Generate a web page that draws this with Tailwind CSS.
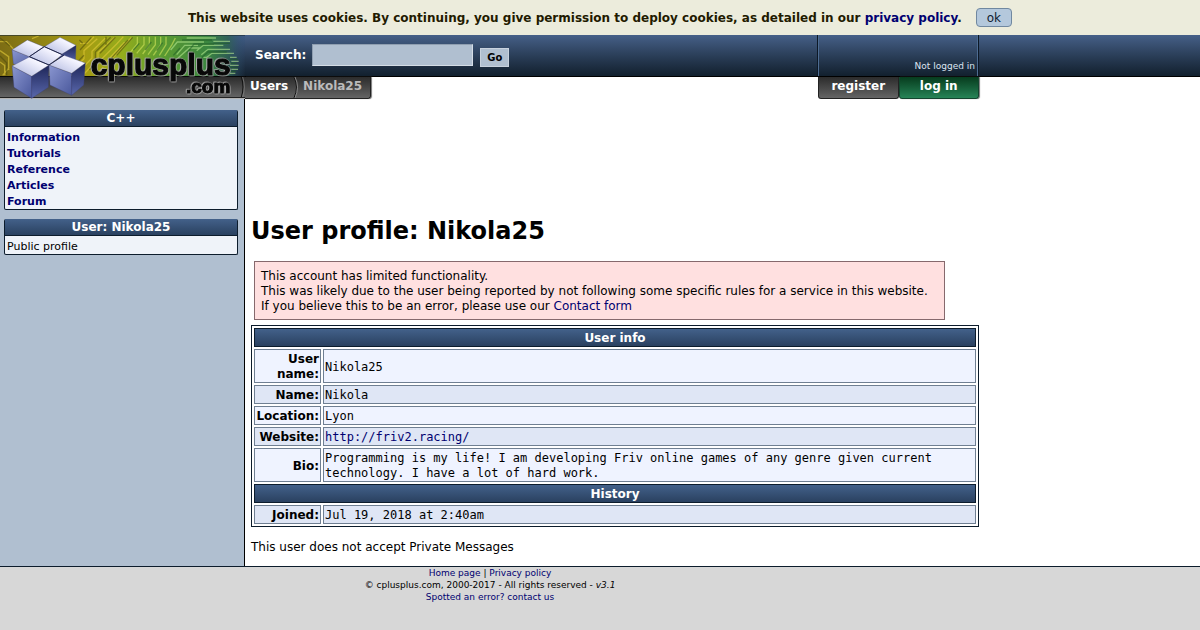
<!DOCTYPE html>
<html lang="en">

<head>
    <meta charset="UTF-8">
    <meta name="viewport" content="width=device-width, initial-scale=1.0">
    <title>User profile: Nikola25 - C++ Users</title>
    <script src="https://cdn.jsdelivr.net/npm/@tailwindcss/browser@4"></script>
</head>

<body class="flex min-h-screen flex-col bg-white font-['DejaVu_Sans',Verdana,sans-serif] text-[12px] leading-[15px] text-black">

    <!-- cookie notice -->
    <div class="flex min-h-[35px] items-center justify-center gap-[14px] bg-[#ececdc]">
        <p class="pt-px font-bold text-[#221a00]">This website uses cookies. By continuing, you give permission to deploy cookies, as detailed in our <a href="#" class="text-[#000070]">privacy policy</a>.</p>
        <button type="button" class="rounded border border-[#7088a0] bg-[#b4c8dc] px-[10px] pt-[2px] text-[#102030]">ok</button>
    </div>

    <header class="flex items-start">
        <a href="#" class="relative z-10 shrink-0" aria-label="cplusplus.com">
            <svg class="block h-[64px] w-[245px]" viewBox="0 15 735 192" preserveAspectRatio="none">
                <defs>
                    <linearGradient id="board" x1="0" x2="1" y1="0" y2="0">
                        <stop offset="0" stop-color="#7d6d14" />
                        <stop offset=".35" stop-color="#a59c12" />
                        <stop offset=".5" stop-color="#94ac1c" />
                        <stop offset=".65" stop-color="#5c9c30" />
                        <stop offset=".85" stop-color="#3a8640" />
                        <stop offset=".93" stop-color="#2f6550" stop-opacity=".8" />
                        <stop offset="1" stop-color="#30507a" stop-opacity="0" />
                    </linearGradient>
                    <linearGradient id="bar" x1="0" x2="0" y1="0" y2="1">
                        <stop offset="0" stop-color="#415d86" />
                        <stop offset="1" stop-color="#14222f" />
                    </linearGradient>
                    <linearGradient id="strip" x1="0" x2="0" y1="0" y2="1">
                        <stop offset="0" stop-color="#2c2c2c" />
                        <stop offset="1" stop-color="#646464" />
                    </linearGradient>
                    <linearGradient id="top" x1="0" x2="1" y1="1" y2="0">
                        <stop offset="0" stop-color="#aab2dc" />
                        <stop offset=".7" stop-color="#f4f4ff" />
                        <stop offset="1" stop-color="#fff" />
                    </linearGradient>
                    <linearGradient id="left" x1="0" x2="1" y1="0" y2="1">
                        <stop offset="0" stop-color="#8a96d0" />
                        <stop offset="1" stop-color="#4a589c" />
                    </linearGradient>
                    <linearGradient id="right" x1="0" x2="0" y1="0" y2="1">
                        <stop offset="0" stop-color="#1d2558" />
                        <stop offset="1" stop-color="#5a68ac" />
                    </linearGradient>
                </defs>
                <rect y="15" width="735" height="123" fill="url(#bar)" />
                <rect y="15" width="735" height="123" fill="url(#board)" />
                <!-- circuit traces -->
                <g fill="none" stroke-width="4">
                    <path stroke="#e2cc38" stroke-opacity=".6" d="M0 35h20l20 22M0 62l26 18v40M8 136l20-24M0 96l14 10v30M96 26l20-8M228 110l24-24V62l40-36M238 124l38-40V64l40-40M250 134l44-46V68l50-46M240 40h22l20-20M300 92l50-50 20-22M318 96l56-60M338 84l56-62M290 132l20-20" />
                    <path stroke="#4d4a0c" stroke-opacity=".55" d="M0 24l30 24M0 78l20 20v38M232 96l20-20M240 60l34-38M268 120l18-20V66l46-44M300 70l46-48M318 20v24M328 92l56-62M350 76l48-54M238 30l10 10" />
                    <path stroke="#d2e45c" stroke-opacity=".6" d="M392 66l20-24V20M410 70l22-26V20M428 72l20-28V20M444 74l22-30V20M460 76l22-32V20M478 76l20-32V20M494 78l22-34 10-20" />
                    <path stroke="#b4e890" stroke-opacity=".6" d="M512 60l20-24h80M530 74l24-28h40M534 84l34-30h34M560 24h88M590 62l20-16h60M604 74l20-16h66M610 82h10l16-12h66M640 34h50M690 82h20M694 94h22M690 106h26M694 118h20M690 130h16" />
                    <path stroke="#1d5b26" stroke-opacity=".55" d="M400 60l18-20M436 60l18-24M470 62l18-24M520 76l20-22M560 70l22-28h60M620 66h60M606 82l16-14M690 88h24M690 100h20M690 112h24M690 124h18M546 30h90M640 40h50" />
                </g>
                <rect y="15" width="735" height="3" fill="#1d2b33" fill-opacity=".6" />
                <rect y="138" width="735" height="3" fill="#080808" />
                <rect y="141" width="735" height="60" fill="url(#strip)" />
                <rect y="201" width="735" height="4" fill="#222" />
                <path d="M724 141q10 30 0 60" fill="none" stroke="#111" stroke-width="3" />
                <path d="M728 141q10 30 0 60" fill="none" stroke="#888" stroke-width="2" />
                <!-- cubes -->
                <g stroke="#39417c" stroke-width="1" stroke-linejoin="round">
                    <path fill="url(#left)" d="M36 59l52 21 30 12-30 20-48-10z" />
                    <path fill="url(#right)" d="M228 46l-2 50-61 4 20-28z" />
                    <path fill="url(#top)" d="M36 59l46-29 49 20-43 30z" />
                    <path fill="url(#top)" d="M133 50l47-28 48 24-43 27z" />
                    <path fill="url(#top)" d="M88 80l44-30 55 24-40 31z" />
                    <path fill="url(#left)" d="M36 108l59 31v66l-53-33z" />
                    <path fill="url(#right)" d="M95 139l52-34-2 67-50 33z" />
                    <path fill="url(#left)" d="M147 105l68 25v66l-65-31z" />
                    <path fill="url(#right)" d="M215 130l41-31-5 66-36 31z" />
                    <path fill="url(#top)" d="M36 108l52-27 59 24-52 34z" />
                    <path fill="url(#top)" d="M147 105l45-29 64 23-41 31z" />
                </g>
                <path d="M88 80l59 25 45-30M133 50l54 24M88 80l45-30" fill="none" stroke="#20264c" stroke-width="3" />
                <g class="font-['Liberation_Sans',Arial,sans-serif] font-bold [filter:drop-shadow(2px_2px_1px_#aaa)_drop-shadow(-3px_-2px_1px_#aaa)]" fill="#080808" stroke="#080808" stroke-width="3" stroke-linejoin="round">
                    <text x="272" y="134" font-size="90">cplusplus</text>
                    <text x="558" y="189" font-size="57">.com</text>
                </g>
            </svg>
        </a>
        <div class="min-w-0 flex-1">
            <div class="h-[42px] border-b border-black bg-linear-to-b from-[#466088] to-[#12202e]">
                <div class="flex h-full max-w-[734px] justify-between">
                    <form class="flex items-start pt-[9px] pl-[10px]">
                        <label for="search" class="mt-1 font-bold text-white">Search:</label>
                        <input id="search" type="text" class="ml-[6px] h-[22px] w-[161px] border border-[#d5dde6] border-t-[#8f9eb0] border-l-[#8f9eb0] bg-[#b0bfd0] px-1">
                        <button type="submit" class="mt-1 ml-[7px] h-[19px] w-[29px] border border-[#c8d2de] bg-[#b0bfd0] text-[10px] leading-[15px] font-bold text-black">Go</button>
                    </form>
                    <div class="flex w-[162px] items-end justify-end border-x border-[#0c1826] shadow-[inset_1px_0_#4d6c92,inset_-1px_0_#4d6c92]">
                        <span class="px-[3px] pb-1 text-[9px] leading-[12px] text-[#dce4f0]">Not logged in</span>
                    </div>
                </div>
            </div>
            <div class="flex max-w-[734px] justify-between leading-[18px] font-bold">
                <nav aria-label="Breadcrumb" class="flex h-[22px] rounded-br-[3px] border-r border-b border-[#222] bg-linear-to-b from-[#2c2c2c] to-[#646464] pr-2 pl-[5px] shadow-[1px_0_1px_#777]">
                    <a href="#" class="text-white">Users</a>
                    <svg class="mx-1 h-[21px] w-[7px]" viewBox="0 0 7 21" fill="none">
                        <path d="M2 0q5 10 0 21" stroke="#111" />
                        <path d="M3 0q5 10 0 21" stroke="#888" />
                    </svg>
                    <span class="text-[#bbb]">Nikola25</span>
                </nav>
                <div class="flex w-[161px] text-center text-white">
                    <a href="#" class="h-[22px] flex-1 rounded-b-[3px] border-x border-b border-[#222] bg-linear-to-b from-[#2c2c2c] to-[#646464]">register</a>
                    <a href="#" class="h-[22px] flex-1 rounded-b-[3px] border-x border-b border-[#13452f] bg-linear-to-b from-[#073c1e] to-[#268457] shadow-[1px_0_1px_#777]">log in</a>
                </div>
            </div>
        </div>
    </header>

    <div class="flex flex-1">
        <aside class="w-[245px] shrink-0 space-y-[9px] border-r border-black bg-[#b0bfd0] pt-[11px] pr-[6px] pl-1">
            <section class="rounded-[2px] border border-t-0 border-[#0c1c2c] bg-[#eff3f9]">
                <h2 class="border-b border-[#0c1c2c] bg-linear-to-b from-[#43618a] to-[#2a4160] pt-px text-center font-bold text-white">C++</h2>
                <ul class="-mb-px px-[2px] pt-[3px] text-[11px] leading-[16px] font-bold text-[#000070]">
                    <li><a href="#">Information</a></li>
                    <li><a href="#">Tutorials</a></li>
                    <li><a href="#">Reference</a></li>
                    <li><a href="#">Articles</a></li>
                    <li><a href="#">Forum</a></li>
                </ul>
            </section>
            <section class="rounded-[2px] border border-t-0 border-[#0c1c2c] bg-[#eff3f9]">
                <h2 class="border-b border-[#0c1c2c] bg-linear-to-b from-[#43618a] to-[#2a4160] pt-px text-center font-bold text-white">User: Nikola25</h2>
                <ul class="-mb-px px-[2px] pt-[3px] text-[11px] leading-[16px]">
                    <li>Public profile</li>
                </ul>
            </section>
        </aside>

        <main class="max-w-[734px] min-w-0 flex-1 pt-[118px] pb-[11px] pl-[6px]">
            <h1 class="text-[24px] leading-[28px] font-bold">User profile: Nikola25</h1>
            <div class="mt-4 mr-[34px] ml-[3px] border border-[#86696d] bg-[#ffe0e0] px-[6px] pt-[7px] pb-[5px]">
                This account has limited functionality.<br>
                This was likely due to the user being reported by not following some specific rules for a service in this website.<br>
                If you believe this to be an error, please use our <a href="#" class="text-[#000070]">Contact form</a>
            </div>

            <table class="mt-[5px] w-full border-separate border-spacing-[2px] border border-[#0c1c2c] [&_td]:border [&_td]:border-[#6f7f92] [&_td]:px-px [&_td]:pt-[2px] [&_td]:font-['DejaVu_Sans_Mono',monospace] [&_th]:border [&_th]:px-px [&_th]:pt-[2px] [&_tbody_th]:text-right">
                <thead>
                    <tr>
                        <th colspan="2" class="border-[#0c1c2c] bg-linear-to-b from-[#43618a] to-[#2a4160] text-center text-white">User info</th>
                    </tr>
                </thead>
                <tbody>
                    <tr class="bg-[#eff3ff]">
                        <th class="w-[67px] border-[#6f7f92]">User name:</th>
                        <td>Nikola25</td>
                    </tr>
                    <tr class="bg-[#dfe6f5]">
                        <th class="border-[#6f7f92]">Name:</th>
                        <td>Nikola</td>
                    </tr>
                    <tr class="bg-[#eff3ff]">
                        <th class="border-[#6f7f92]">Location:</th>
                        <td>Lyon</td>
                    </tr>
                    <tr class="bg-[#dfe6f5]">
                        <th class="border-[#6f7f92]">Website:</th>
                        <td><a href="#" class="text-[#000070]">http://friv2.racing/</a></td>
                    </tr>
                    <tr class="bg-[#eff3ff]">
                        <th class="border-[#6f7f92]">Bio:</th>
                        <td>Programming is my life! I am developing Friv online games of any genre given current technology. I have a lot of hard work.</td>
                    </tr>
                </tbody>
                <thead>
                    <tr>
                        <th colspan="2" class="border-[#0c1c2c] bg-linear-to-b from-[#43618a] to-[#2a4160] text-center text-white">History</th>
                    </tr>
                </thead>
                <tbody>
                    <tr class="bg-[#dfe6f5]">
                        <th class="border-[#6f7f92]">Joined:</th>
                        <td>Jul 19, 2018 at 2:40am</td>
                    </tr>
                </tbody>
            </table>

            <p class="mt-[13px]">This user does not accept Private Messages</p>
        </main>
    </div>

    <footer class="min-h-[64px] border-t border-[#0c1c2c] bg-[#d7d7d7] text-[9px] leading-[12px]">
        <div class="max-w-[980px] text-center">
            <a href="#" class="text-[#000070]">Home page</a> | <a href="#" class="text-[#000070]">Privacy policy</a><br>
            © cplusplus.com, 2000-2017 - All rights reserved - <i>v3.1</i><br>
            <a href="#" class="text-[#000070]">Spotted an error? contact us</a>
        </div>
    </footer>
</body>

</html>
